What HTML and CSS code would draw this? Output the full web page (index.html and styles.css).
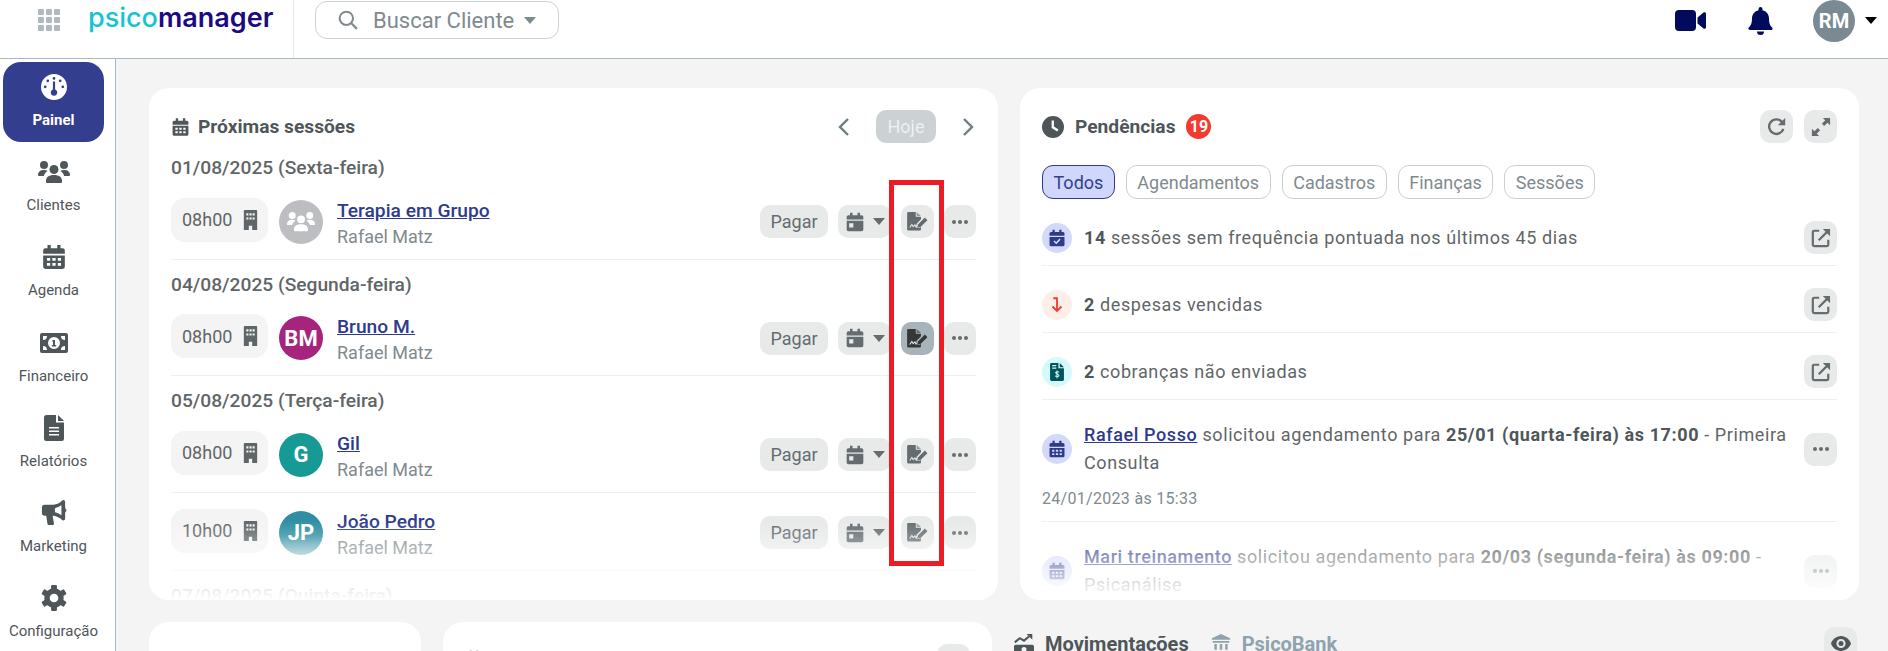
FILE: index.html
```html
<!DOCTYPE html>
<html lang="pt-BR">
<head>
    <meta charset="UTF-8">
    <meta name="viewport" content="width=device-width, initial-scale=1.0">
    <title>Psicomanager - Painel</title>
    <link rel="stylesheet" href="styles.css">
</head>
<body>
    <!-- icon sprite -->
    <svg class="sprite" aria-hidden="true">
        <symbol id="i-cal" viewBox="0 0 24 24"><path fill-rule="evenodd" d="M6 1h3v3h6V1h3v3h2a2 2 0 0 1 2 2v3H2V6a2 2 0 0 1 2-2h2zM2 10.5h20V21a2 2 0 0 1-2 2H4a2 2 0 0 1-2-2zM5.5 13h3v2.5h-3zM10.5 13h3v2.5h-3zM15.500 13h3v2.500h-3zM5.500 17.500h3V20h-3zM10.500 17.500h3V20h-3zM15.500 17.500h3V20h-3z"/></symbol>
        <symbol id="i-cal-day" viewBox="0 0 24 24"><path fill-rule="evenodd" d="M6 1h3v3h6V1h3v3h2a2 2 0 0 1 2 2v3H2V6a2 2 0 0 1 2-2h2zM2 10.500h20V21a2 2 0 0 1-2 2H4a2 2 0 0 1-2-2zM5 13.500v5h5v-5z"/></symbol>
        <symbol id="i-cal-check" viewBox="0 0 24 24"><path fill-rule="evenodd" d="M6 1h3v3h6V1h3v3h2a2 2 0 0 1 2 2v3H2V6a2 2 0 0 1 2-2h2zM2 10.500h20V21a2 2 0 0 1-2 2H4a2 2 0 0 1-2-2z"/><path d="M8 16l3 3 5-5.500" fill="none" stroke="#d3d9fb" stroke-width="2"/></symbol>
        <symbol id="i-building" viewBox="0 0 18 24"><path fill-rule="evenodd" d="M1 1a1 1 0 0 1 1-1h14a1 1 0 0 1 1 1v23h-6v-5H7v5H1zM4 4v2.500h2.500V4zM7.800 4v2.500h2.500V4zM11.500 4v2.500H14V4zM4 9v2.500h2.500V9zM7.800 9v2.500h2.500V9zM11.500 9v2.500H14V9z"/></symbol>
        <symbol id="i-users" viewBox="0 0 32 24"><circle cx="6" cy="5" r="4"/><circle cx="26" cy="5" r="4"/><circle cx="16" cy="9.500" r="4.500"/><path d="M8 21c0-4 3-6 8-6s8 2 8 6v1a1 1 0 0 1-1 1H9a1 1 0 0 1-1-1zM0 15c0-3 2-5 6-5 1.500 0 2.700.4 3.600 1-2 1.200-3.300 3-3.700 5H1a1 1 0 0 1-1-1zM32 15c0-3-2-5-6-5-1.500 0-2.700.4-3.600 1 2 1.200 3.300 3 3.700 5H31a1 1 0 0 0 1-1z"/></symbol>
        <symbol id="i-money" viewBox="0 0 28 20"><path fill-rule="evenodd" d="M2 0h24a2 2 0 0 1 2 2v16a2 2 0 0 1-2 2H2a2 2 0 0 1-2-2V2a2 2 0 0 1 2-2zM14 4a6 6 0 1 0 0 12 6 6 0 0 0 0-12zM3 3v4a4 4 0 0 0 4-4zM25 3h-4a4 4 0 0 0 4 4zM3 17h4a4 4 0 0 0-4-4zM25 17v-4a4 4 0 0 0-4 4z"/><path d="M12.500 7h2.500v5h1.200v1.500h-4.400V12h1.200V8.500h-.8z"/></symbol>
        <symbol id="i-file" viewBox="0 0 20 26"><path fill-rule="evenodd" d="M2.500 0H12v7.500h8V23.500a2.500 2.500 0 0 1-2.500 2.500h-15A2.500 2.500 0 0 1 0 23.500v-21A2.500 2.500 0 0 1 2.500 0zM5 12v1.600h10V12zM5 15.500v1.600h10v-1.600zM5 19v1.600h10V19z"/><path d="M14 0l6 6h-6z"/></symbol>
        <symbol id="i-bullhorn" viewBox="0 0 26 28"><path fill-rule="evenodd" d="M23 0a2 2 0 0 1 2 2v18a2 2 0 0 1-2 2 2 2 0 0 1-1.300-.5C19 19 16 17.500 12.500 17H11.500l1.500 8.500a1.500 1.500 0 0 1-1.500 1.500h-4a1.500 1.500 0 0 1-1.500-1.200L4.600 17H3a3 3 0 0 1-3-3V8a3 3 0 0 1 3-3h9c4 0 7.500-2 9.700-4.500A2 2 0 0 1 23 0zM21 5.500c-2 1.600-4.400 2.800-7 3.300v4.400c2.600.5 5 1.700 7 3.300z"/><path d="M25 8.500a3 3 0 0 1 0 5z"/></symbol>
        <symbol id="i-gear" viewBox="0 0 24 24"><circle cx="12" cy="12" r="6.500" fill="none" stroke="currentColor" stroke-width="5"/><g><rect x="9.300" y="0" width="5.400" height="5" rx="1"/><rect x="9.300" y="0" width="5.400" height="5" rx="1" transform="rotate(60 12 12)"/><rect x="9.300" y="0" width="5.400" height="5" rx="1" transform="rotate(120 12 12)"/><rect x="9.300" y="0" width="5.400" height="5" rx="1" transform="rotate(180 12 12)"/><rect x="9.300" y="0" width="5.400" height="5" rx="1" transform="rotate(240 12 12)"/><rect x="9.300" y="0" width="5.400" height="5" rx="1" transform="rotate(300 12 12)"/></g></symbol>
        <symbol id="i-gauge" viewBox="0 0 24 24"><path fill-rule="evenodd" d="M12 0a12 12 0 1 1 0 24 12 12 0 0 1 0-24zM12 2.800a1.300 1.300 0 1 0 0 2.600 1.300 1.300 0 0 0 0-2.600zM6.300 5a1.300 1.300 0 1 0 0 2.600 1.300 1.300 0 0 0 0-2.600zM17.700 5a1.300 1.300 0 1 0 0 2.600 1.300 1.300 0 0 0 0-2.600zM3.900 10.500a1.300 1.300 0 1 0 0 2.600 1.300 1.300 0 0 0 0-2.600zM20.100 10.500a1.300 1.300 0 1 0 0 2.600 1.300 1.300 0 0 0 0-2.600zM11 7v7.300a3 3 0 1 0 2 0V7z"/></symbol>
        <symbol id="i-sign" viewBox="0 0 24 22"><path d="M1.500 0H10v5.500h6v3l-5 5-1 4.500 4 .5 2-1V20a1.500 1.500 0 0 1-1.500 1.500h-13A1.500 1.500 0 0 1 0 20V1.500A1.500 1.500 0 0 1 1.500 0z"/><path d="M11 0l5 4.500h-5z" opacity=".6"/><path d="M12.500 14.500L20.500 6.500l3 3-8 8-3.800.8z"/><path d="M3 18l2.500-3.500 1.500 2.500 2-2 1.500 2.500" fill="none" stroke="#e8eaea" stroke-width="1.200"/></symbol>
        <symbol id="i-clock" viewBox="0 0 24 24"><path fill-rule="evenodd" d="M12 0a12 12 0 1 1 0 24 12 12 0 0 1 0-24zM10.500 5v8l6 4 1.500-2.200-5-3.300V5z"/></symbol>
        <symbol id="i-bank" viewBox="0 0 24 24"><path d="M12 0l11 5v2H1V5zM2 8.500h20v2H2zM4 12h3v7H4zM10.500 12h3v7h-3zM17 12h3v7h-3zM2 20.500h20V24H2z"/></symbol>
        <symbol id="i-moves" viewBox="0 0 24 24"><path d="M1 10l6-5 5 3 6-5" fill="none" stroke="currentColor" stroke-width="2.500"/><path d="M15 0h7v7z"/><path fill-rule="evenodd" d="M2 13h20a2 2 0 0 1 2 2v7a2 2 0 0 1-2 2H2a2 2 0 0 1-2-2v-7a2 2 0 0 1 2-2zM12 15.500a3 3 0 1 0 0 6 3 3 0 0 0 0-6z"/></symbol>
        <symbol id="i-bill-file" viewBox="0 0 20 26"><path fill-rule="evenodd" d="M2 0h10v7.500h8V24a2 2 0 0 1-2 2H2a2 2 0 0 1-2-2V2a2 2 0 0 1 2-2zM3 3v1.800h6V3zM3 6.500v1.800h6V6.500z"/><path d="M14 0l6 6h-6z"/><path d="M13 13.500c-.5-1-4.500-1.500-5 .5s5 2 4.800 4.200-4.800 1.500-5.300.3M10 11v11" fill="none" stroke="#d5fafb" stroke-width="1.500"/></symbol>
    </svg>

    <header class="topbar">
        <svg class="apps-icon" viewBox="0 0 22 22"><rect x="0" y="0" width="6" height="6" rx="1"/><rect x="8" y="0" width="6" height="6" rx="1"/><rect x="16" y="0" width="6" height="6" rx="1"/><rect x="0" y="8" width="6" height="6" rx="1"/><rect x="8" y="8" width="6" height="6" rx="1"/><rect x="16" y="8" width="6" height="6" rx="1"/><rect x="0" y="16" width="6" height="6" rx="1"/><rect x="8" y="16" width="6" height="6" rx="1"/><rect x="16" y="16" width="6" height="6" rx="1"/></svg>
        <div class="logo"><span class="logo-psico">psico</span><span class="logo-manager">manager</span></div>
        <div class="search">
            <svg class="search-icon" viewBox="0 0 18 18"><circle cx="7.500" cy="7.500" r="6" fill="none" stroke="currentColor" stroke-width="1.800"/><path d="M12 12l5 5" stroke="currentColor" stroke-width="2"/></svg>
            <span class="search-text">Buscar Cliente</span>
            <span class="caret caret-grey"></span>
        </div>
        <div class="topbar-right">
            <svg class="video-icon" viewBox="0 0 31 21"><rect x="0" y="0" width="21" height="21" rx="4"/><path d="M22.500 7.500l6-5c1-.7 2.500-.2 2.500 1.200v13.600c0 1.400-1.500 1.900-2.500 1.200l-6-5z"/></svg>
            <svg class="bell-icon" viewBox="0 0 25 28"><path d="M12.500 0a2 2 0 0 1 2 2v1.200c4 .8 6.500 4.200 6.500 8.300 0 5.500 1.500 7.500 3.300 9.300.7.800.3 2.200-1 2.200H1.700C.4 22.800 0 21.400.7 20.600 2.500 18.800 4 16.800 4 11.500c0-4.100 2.500-7.500 6.500-8.300V2a2 2 0 0 1 2-2zM9 24.500h7a3.500 3.500 0 0 1-7 0z"/></svg>
            <div class="user-avatar">RM</div>
            <span class="caret caret-black"></span>
        </div>
    </header>

    <div class="layout">
        <nav class="sidebar">
            <a class="nav-item active" href="#"><svg class="nav-icon nav-gauge"><use href="#i-gauge"/></svg><span>Painel</span></a>
            <a class="nav-item" href="#"><svg class="nav-icon nav-users"><use href="#i-users"/></svg><span>Clientes</span></a>
            <a class="nav-item" href="#"><svg class="nav-icon"><use href="#i-cal"/></svg><span>Agenda</span></a>
            <a class="nav-item" href="#"><svg class="nav-icon nav-money"><use href="#i-money"/></svg><span>Financeiro</span></a>
            <a class="nav-item" href="#"><svg class="nav-icon"><use href="#i-file"/></svg><span>Relatórios</span></a>
            <a class="nav-item" href="#"><svg class="nav-icon"><use href="#i-bullhorn"/></svg><span>Marketing</span></a>
            <a class="nav-item" href="#"><svg class="nav-icon"><use href="#i-gear"/></svg><span>Configuração</span></a>
        </nav>

        <main class="content">
            <div class="top-row">
                <section class="card card-sessions">
                    <div class="card-head">
                        <h2 class="card-title"><svg class="title-icon"><use href="#i-cal"/></svg>Próximas sessões</h2>
                        <div class="day-nav">
                            <svg class="chevron" viewBox="0 0 12 20"><path d="M10 2L2 10l8 8" fill="none" stroke="currentColor" stroke-width="2.400"/></svg>
                            <button class="today-button">Hoje</button>
                            <svg class="chevron" viewBox="0 0 12 20"><path d="M2 2l8 8-8 8" fill="none" stroke="currentColor" stroke-width="2.400"/></svg>
                        </div>
                    </div>

                    <div class="date-line">01/08/2025 (Sexta-feira)</div>
                    <div class="session">
                        <div class="time-pill">08h00<svg class="building"><use href="#i-building"/></svg></div>
                        <div class="avatar avatar-group"><svg class="group-icon"><use href="#i-users"/></svg></div>
                        <div class="session-info"><a href="#">Terapia em Grupo</a><span>Rafael Matz</span></div>
                        <div class="session-actions">
                            <button class="soft-button pay">Pagar</button>
                            <button class="soft-button cal"><svg class="cal-icon"><use href="#i-cal-day"/></svg><span class="caret caret-dark"></span></button>
                            <button class="soft-button square"><svg class="sign-icon"><use href="#i-sign"/></svg></button>
                            <button class="soft-button square dots"><i></i><i></i><i></i></button>
                        </div>
                    </div>

                    <div class="date-line">04/08/2025 (Segunda-feira)</div>
                    <div class="session">
                        <div class="time-pill">08h00<svg class="building"><use href="#i-building"/></svg></div>
                        <div class="avatar avatar-bm">BM</div>
                        <div class="session-info"><a href="#">Bruno M.</a><span>Rafael Matz</span></div>
                        <div class="session-actions">
                            <button class="soft-button pay">Pagar</button>
                            <button class="soft-button cal"><svg class="cal-icon"><use href="#i-cal-day"/></svg><span class="caret caret-dark"></span></button>
                            <button class="soft-button square hovered"><svg class="sign-icon"><use href="#i-sign"/></svg></button>
                            <button class="soft-button square dots"><i></i><i></i><i></i></button>
                        </div>
                    </div>

                    <div class="date-line">05/08/2025 (Terça-feira)</div>
                    <div class="session">
                        <div class="time-pill">08h00<svg class="building"><use href="#i-building"/></svg></div>
                        <div class="avatar avatar-g">G</div>
                        <div class="session-info"><a href="#">Gil</a><span>Rafael Matz</span></div>
                        <div class="session-actions">
                            <button class="soft-button pay">Pagar</button>
                            <button class="soft-button cal"><svg class="cal-icon"><use href="#i-cal-day"/></svg><span class="caret caret-dark"></span></button>
                            <button class="soft-button square"><svg class="sign-icon"><use href="#i-sign"/></svg></button>
                            <button class="soft-button square dots"><i></i><i></i><i></i></button>
                        </div>
                    </div>
                    <div class="session">
                        <div class="time-pill">10h00<svg class="building"><use href="#i-building"/></svg></div>
                        <div class="avatar avatar-jp">JP</div>
                        <div class="session-info"><a href="#">João Pedro</a><span>Rafael Matz</span></div>
                        <div class="session-actions">
                            <button class="soft-button pay">Pagar</button>
                            <button class="soft-button cal"><svg class="cal-icon"><use href="#i-cal-day"/></svg><span class="caret caret-dark"></span></button>
                            <button class="soft-button square"><svg class="sign-icon"><use href="#i-sign"/></svg></button>
                            <button class="soft-button square dots"><i></i><i></i><i></i></button>
                        </div>
                    </div>

                    <div class="date-line">07/08/2025 (Quinta-feira)</div>

                    <div class="annotation"></div>
                </section>

                <section class="card card-pending">
                    <div class="card-head">
                        <h2 class="card-title"><svg class="clock-icon"><use href="#i-clock"/></svg>Pendências<span class="count">19</span></h2>
                        <div class="head-buttons">
                            <button class="soft-button square"><svg class="tool-icon" viewBox="0 0 22 22"><path d="M18 13a8 8 0 1 1-1.500-7.500" fill="none" stroke="currentColor" stroke-width="2.600"/><path d="M20 1v8h-8z"/></svg></button>
                            <button class="soft-button square"><svg class="tool-icon" viewBox="0 0 22 22"><path d="M13 1h8v8l-2.800-2.800-3.700 3.700-2.500-2.500 3.700-3.700zM9 21H1v-8l2.800 2.800 3.700-3.700 2.500 2.500-3.700 3.700z"/></svg></button>
                        </div>
                    </div>

                    <div class="filters">
                        <button class="filter selected">Todos</button>
                        <button class="filter">Agendamentos</button>
                        <button class="filter">Cadastros</button>
                        <button class="filter">Finanças</button>
                        <button class="filter">Sessões</button>
                    </div>

                    <div class="pending-item">
                        <div class="pending-main">
                            <span class="dot-icon dot-blue"><svg><use href="#i-cal-check"/></svg></span>
                            <p class="pending-text"><strong>14</strong> sessões sem frequência pontuada nos últimos 45 dias</p>
                            <button class="soft-button square"><svg class="tool-icon" viewBox="0 0 22 22"><path d="M9 3H3.500A1.500 1.500 0 0 0 2 4.500v14A1.500 1.500 0 0 0 3.500 20h14a1.500 1.500 0 0 0 1.500-1.500V13" fill="none" stroke="currentColor" stroke-width="2.400"/><path d="M8.500 13.500L18 4" stroke="currentColor" stroke-width="2.400"/><path d="M13 1h8v8z"/></svg></button>
                        </div>
                    </div>
                    <div class="pending-item">
                        <div class="pending-main">
                            <span class="dot-icon dot-red"><svg viewBox="0 0 24 24"><path d="M7 3h5v17M6 14l6 6 6-6" fill="none" stroke="currentColor" stroke-width="2.400"/></svg></span>
                            <p class="pending-text"><strong>2</strong> despesas vencidas</p>
                            <button class="soft-button square"><svg class="tool-icon" viewBox="0 0 22 22"><path d="M9 3H3.500A1.500 1.500 0 0 0 2 4.500v14A1.500 1.500 0 0 0 3.500 20h14a1.500 1.500 0 0 0 1.500-1.500V13" fill="none" stroke="currentColor" stroke-width="2.400"/><path d="M8.500 13.500L18 4" stroke="currentColor" stroke-width="2.400"/><path d="M13 1h8v8z"/></svg></button>
                        </div>
                    </div>
                    <div class="pending-item">
                        <div class="pending-main">
                            <span class="dot-icon dot-teal"><svg viewBox="0 0 20 26"><use href="#i-bill-file"/></svg></span>
                            <p class="pending-text"><strong>2</strong> cobranças não enviadas</p>
                            <button class="soft-button square"><svg class="tool-icon" viewBox="0 0 22 22"><path d="M9 3H3.500A1.500 1.500 0 0 0 2 4.500v14A1.500 1.500 0 0 0 3.500 20h14a1.500 1.500 0 0 0 1.500-1.500V13" fill="none" stroke="currentColor" stroke-width="2.400"/><path d="M8.500 13.500L18 4" stroke="currentColor" stroke-width="2.400"/><path d="M13 1h8v8z"/></svg></button>
                        </div>
                    </div>
                    <div class="pending-item request">
                        <div class="pending-main">
                            <span class="dot-icon dot-blue"><svg><use href="#i-cal"/></svg></span>
                            <p class="pending-text"><a href="#">Rafael Posso</a> solicitou agendamento para <strong>25/01 (quarta-feira) às 17:00</strong> - Primeira Consulta</p>
                            <button class="soft-button square dots"><i></i><i></i><i></i></button>
                        </div>
                        <div class="pending-date">24/01/2023 às 15:33</div>
                    </div>
                    <div class="pending-item request">
                        <div class="pending-main">
                            <span class="dot-icon dot-blue"><svg><use href="#i-cal"/></svg></span>
                            <p class="pending-text"><a href="#">Mari treinamento</a> solicitou agendamento para <strong>20/03 (segunda-feira) às 09:00</strong> - Psicanálise</p>
                            <button class="soft-button square dots"><i></i><i></i><i></i></button>
                        </div>
                    </div>
                </section>
            </div>

            <div class="bottom-row">
                <section class="card card-small"></section>
                <section class="card card-medium">
                    <svg class="medium-icon"><use href="#i-cal"/></svg>
                    <button class="soft-button square"></button>
                </section>
                <div class="moves-head">
                    <h2 class="card-title moves-title"><svg class="moves-icon"><use href="#i-moves"/></svg>Movimentações</h2>
                    <span class="bank-link"><svg class="bank-icon"><use href="#i-bank"/></svg>PsicoBank</span>
                    <button class="soft-button square eye"><svg class="eye-icon" viewBox="0 0 24 18"><path fill-rule="evenodd" d="M12 0c6 0 10.500 4.500 12 9-1.500 4.500-6 9-12 9S1.500 13.500 0 9C1.500 4.500 6 0 12 0zM12 3.500a5.500 5.500 0 1 0 0 11 5.500 5.500 0 0 0 0-11z"/><circle cx="12" cy="9" r="3"/></svg></button>
                </div>
            </div>
        </main>
    </div>
</body>
</html>
```

FILE: styles.css
```css
* {
    box-sizing: border-box;
}

html,
body {
    height: 100%;
}

body {
    margin: 0;
    overflow: hidden;
    background-color: #f4f4f5;
    color: #4f5659;
    font-family: Roboto, "Liberation Sans", sans-serif;
    font-size: 18px;
}

button {
    font-family: inherit;
    border: none;
    padding: 0;
}

.sprite {
    display: none;
}

svg {
    fill: currentColor;
    flex-shrink: 0;
}

/* top bar */
.topbar {
    display: flex;
    height: 59px;
    background: white;
    border-bottom: 1px solid #aab8c5;
}

.apps-icon {
    width: 22px;
    height: 22px;
    margin: 9px 0 0 38px;
    color: #b0b9bd;
}

.logo {
    width: 206px;
    height: 58px;
    margin-left: 28px;
    border-right: 1px solid #e6e8e9;
    font-family: Inter, sans-serif;
    font-size: 27px;
    font-weight: 500;
    line-height: 36px;
    letter-spacing: 0;
}

.logo-psico {
    color: #14c4d0;
}

.logo-manager {
    color: #1e0a80;
    font-weight: 600;
}

.search {
    display: flex;
    align-items: center;
    width: 244px;
    height: 38px;
    margin: 1px 0 0 21px;
    padding-left: 22px;
    border: 1px solid #ccd3d3;
    border-radius: 12px;
    color: #808a8e;
}

.search-icon {
    width: 20px;
    height: 20px;
}

.search-text {
    margin: 0 10px 0 15px;
    font-size: 22px;
}

.caret {
    display: inline-block;
    width: 0;
    height: 0;
    border-left: 6px solid transparent;
    border-right: 6px solid transparent;
    border-top: 7px solid currentColor;
}

.caret-grey {
    color: #808a8e;
}

.caret-black {
    color: black;
}

.caret-dark {
    color: #646c70;
}

.topbar-right {
    display: flex;
    align-items: center;
    height: 41px;
    margin-left: auto;
    padding-right: 11px;
    color: #020a5c;
}

.video-icon {
    width: 31px;
    height: 21px;
}

.bell-icon {
    width: 25px;
    height: 28px;
    margin-left: 42px;
}

.user-avatar {
    width: 42px;
    height: 42px;
    margin: 0 10px 0 40px;
    border-radius: 50%;
    background: #7a8a92;
    color: white;
    font-size: 20px;
    font-weight: 700;
    line-height: 42px;
    text-align: center;
}

/* side navigation */
.layout {
    display: flex;
    height: 592px;
}

.sidebar {
    width: 116px;
    flex-shrink: 0;
    padding: 3px 11px 0 3px;
    background: white;
    border-right: 1px solid #aab8c5;
}

.nav-item {
    display: flex;
    flex-direction: column;
    align-items: center;
    height: 80px;
    margin-bottom: 5.2px;
    padding-top: 12px;
    border-radius: 18px;
    color: #4f5659;
    font-size: 15px;
    text-decoration: none;
}

.nav-item span {
    margin-top: 10px;
    line-height: 20px;
    white-space: nowrap;
}

.nav-item.active {
    background-color: #343e8f;
    color: white;
    font-weight: 700;
}

.nav-icon {
    width: 26px;
    height: 26px;
}

.nav-users {
    width: 32px;
}

.nav-money {
    width: 28px;
}

/* cards */
.content {
    flex-grow: 1;
    padding: 29px 29px 0 33px;
}

.top-row,
.bottom-row {
    display: flex;
    gap: 22px;
}

.card {
    position: relative;
    background: white;
    border-radius: 20px;
    overflow: hidden;
}

.card-sessions,
.card-pending {
    height: 512px;
    padding: 22px 22px 0;
}

.card-sessions {
    width: 849px;
}

.card-pending {
    width: 839px;
}

/* the lists fade out at the bottom of the card */
.card-sessions::after,
.card-pending::after {
    content: "";
    position: absolute;
    left: 0;
    right: 0;
    bottom: 0;
    height: 80px;
    background: linear-gradient(rgba(255, 255, 255, 0), white);
}

.card-head {
    display: flex;
    justify-content: space-between;
    align-items: center;
    height: 33px;
}

.card-title {
    display: flex;
    align-items: center;
    margin: 0;
    color: #4f5659;
    font-size: 19.2px;
    font-weight: 700;
}

.title-icon {
    width: 19px;
    height: 20px;
    margin-right: 8px;
}

.day-nav {
    display: flex;
    align-items: center;
    gap: 24px;
    color: #6f7c83;
}

.chevron {
    width: 16px;
    height: 20px;
}

.today-button {
    width: 60px;
    height: 33px;
    border-radius: 10px;
    background-color: #ccd1d3;
    color: #eef0f1;
    font-size: 18px;
}

/* session rows */
.date-line {
    height: 38.6px;
    padding-top: 11px;
    color: #5f6668;
    font-size: 19.2px;
    font-weight: 500;
    line-height: 27px;
}

.session {
    display: flex;
    align-items: center;
    height: 78px;
    padding: 16px 0 13px;
    border-bottom: 1px solid #eef0f0;
}

.time-pill {
    display: flex;
    align-items: center;
    justify-content: space-between;
    width: 97px;
    height: 44px;
    margin-bottom: 4px;
    padding: 0 10px 0 11px;
    border-radius: 14px;
    background-color: #f4f4f5;
    color: #5f6668;
}

.building {
    width: 15px;
    height: 20px;
}

.avatar {
    display: flex;
    align-items: center;
    justify-content: center;
    width: 44px;
    height: 44px;
    margin-left: 11px;
    border-radius: 50%;
    color: white;
    font-size: 22px;
    font-weight: 700;
}

.avatar-group {
    background-color: #bcbec2;
}

.avatar-bm {
    background-color: #a6237e;
}

.avatar-g {
    background-color: #179a96;
}

.avatar-jp {
    background: linear-gradient(#2e8ea3 55%, #8bbcc6);
}

.group-icon {
    width: 28px;
    height: 21px;
}

.session-info {
    display: flex;
    flex-direction: column;
    margin-left: 14px;
    padding-top: 4px;
    line-height: 26px;
    color: #808a8e;
}

.session-info a {
    font-size: 19.2px;
}

.session-info a,
.pending-text a {
    color: #2e3a8c;
    font-weight: 500;
}

.session-actions {
    display: flex;
    margin-left: auto;
    gap: 10px;
}

.soft-button {
    display: flex;
    align-items: center;
    justify-content: center;
    flex-shrink: 0;
    height: 33px;
    border-radius: 10px;
    background-color: #e8eaea;
    color: #646c70;
    font-size: 18px;
}

.pay {
    width: 68px;
}

.cal {
    gap: 8px;
    width: 53px;
}

.square {
    width: 33px;
}

.session-actions .dots {
    width: 32px;
}

.dots {
    gap: 2px;
}

.dots i {
    width: 4px;
    height: 4px;
    border-radius: 50%;
    background-color: #646c70;
}

.hovered {
    background-color: #a9b4ba;
    color: #333738;
}

.cal-icon {
    width: 20px;
    height: 20px;
}

.sign-icon {
    width: 21px;
    height: 19px;
}

.annotation {
    position: absolute;
    left: 740px;
    top: 92px;
    z-index: 2;
    width: 55px;
    height: 386px;
    border: 5px solid #ed1c24;
}

/* pending list */
.clock-icon {
    width: 22px;
    height: 22px;
    margin-right: 11px;
}

.count {
    width: 25px;
    height: 25px;
    margin-left: 11px;
    border-radius: 50%;
    background-color: #f4392e;
    color: white;
    font-size: 16px;
    line-height: 25px;
    text-align: center;
}

.head-buttons {
    display: flex;
    gap: 11px;
}

.tool-icon {
    width: 20px;
    height: 20px;
}

.filters {
    display: flex;
    gap: 11px;
    margin-top: 22px;
}

.filter {
    height: 34px;
    padding: 0 10.5px;
    border: 1px solid #c9d0d0;
    border-radius: 11px;
    background: white;
    color: #808a8e;
    font-size: 18px;
}

.filter.selected {
    background-color: #d1d7fb;
    border-color: #2e3a8c;
    color: #343e8f;
}

.pending-item {
    padding: 22px 0 11px;
    border-bottom: 1px solid #eef0f0;
}

.pending-item.request {
    padding: 21px 0 10px;
}

.pending-main {
    display: flex;
    align-items: center;
}

.dot-icon {
    display: flex;
    align-items: center;
    justify-content: center;
    flex-shrink: 0;
    width: 30px;
    height: 30px;
    margin-right: 12px;
    border-radius: 50%;
}

.dot-icon svg {
    width: 18px;
    height: 18px;
}

.dot-blue {
    background-color: #d3d9fb;
    color: #2e3a8c;
}

.dot-red {
    background-color: #fdeee9;
    color: #f4392e;
}

.dot-teal {
    background-color: #d5fafb;
    color: #00545c;
}

.pending-text {
    flex-grow: 1;
    margin: 0;
    padding-right: 15px;
    color: #5f6668;
    line-height: 28px;
    letter-spacing: 0.6px;
}

.pending-text strong {
    color: #4f5659;
    font-weight: 700;
}

.pending-date {
    margin-top: 10px;
    color: #808a8e;
    font-size: 16px;
    line-height: 24px;
    letter-spacing: 0.3px;
}

/* lower row, mostly cut off by the window */
.bottom-row {
    margin-top: 22px;
}

.card-small,
.card-medium {
    height: 60px;
}

.card-small {
    width: 272px;
}

.card-medium {
    display: flex;
    justify-content: space-between;
    width: 549px;
    padding: 22px 22px 0;
}

.medium-icon {
    width: 18px;
    height: 18px;
    margin-top: 6px;
}

.moves-head {
    display: flex;
    align-items: center;
    flex-grow: 1;
    height: 33px;
    margin-top: 5px;
    padding-right: 2px;
}

.moves-title {
    font-size: 20px;
}

.moves-icon {
    width: 20px;
    height: 20px;
    margin-right: 11px;
}

.bank-link {
    display: flex;
    align-items: center;
    margin-left: 22px;
    color: #8fa3ad;
    font-size: 20px;
    font-weight: 700;
}

.bank-icon {
    width: 20px;
    height: 20px;
    margin-right: 11px;
}

.eye {
    margin-left: auto;
}

.eye-icon {
    width: 20px;
    height: 15px;
    color: #4f5659;
}
```
